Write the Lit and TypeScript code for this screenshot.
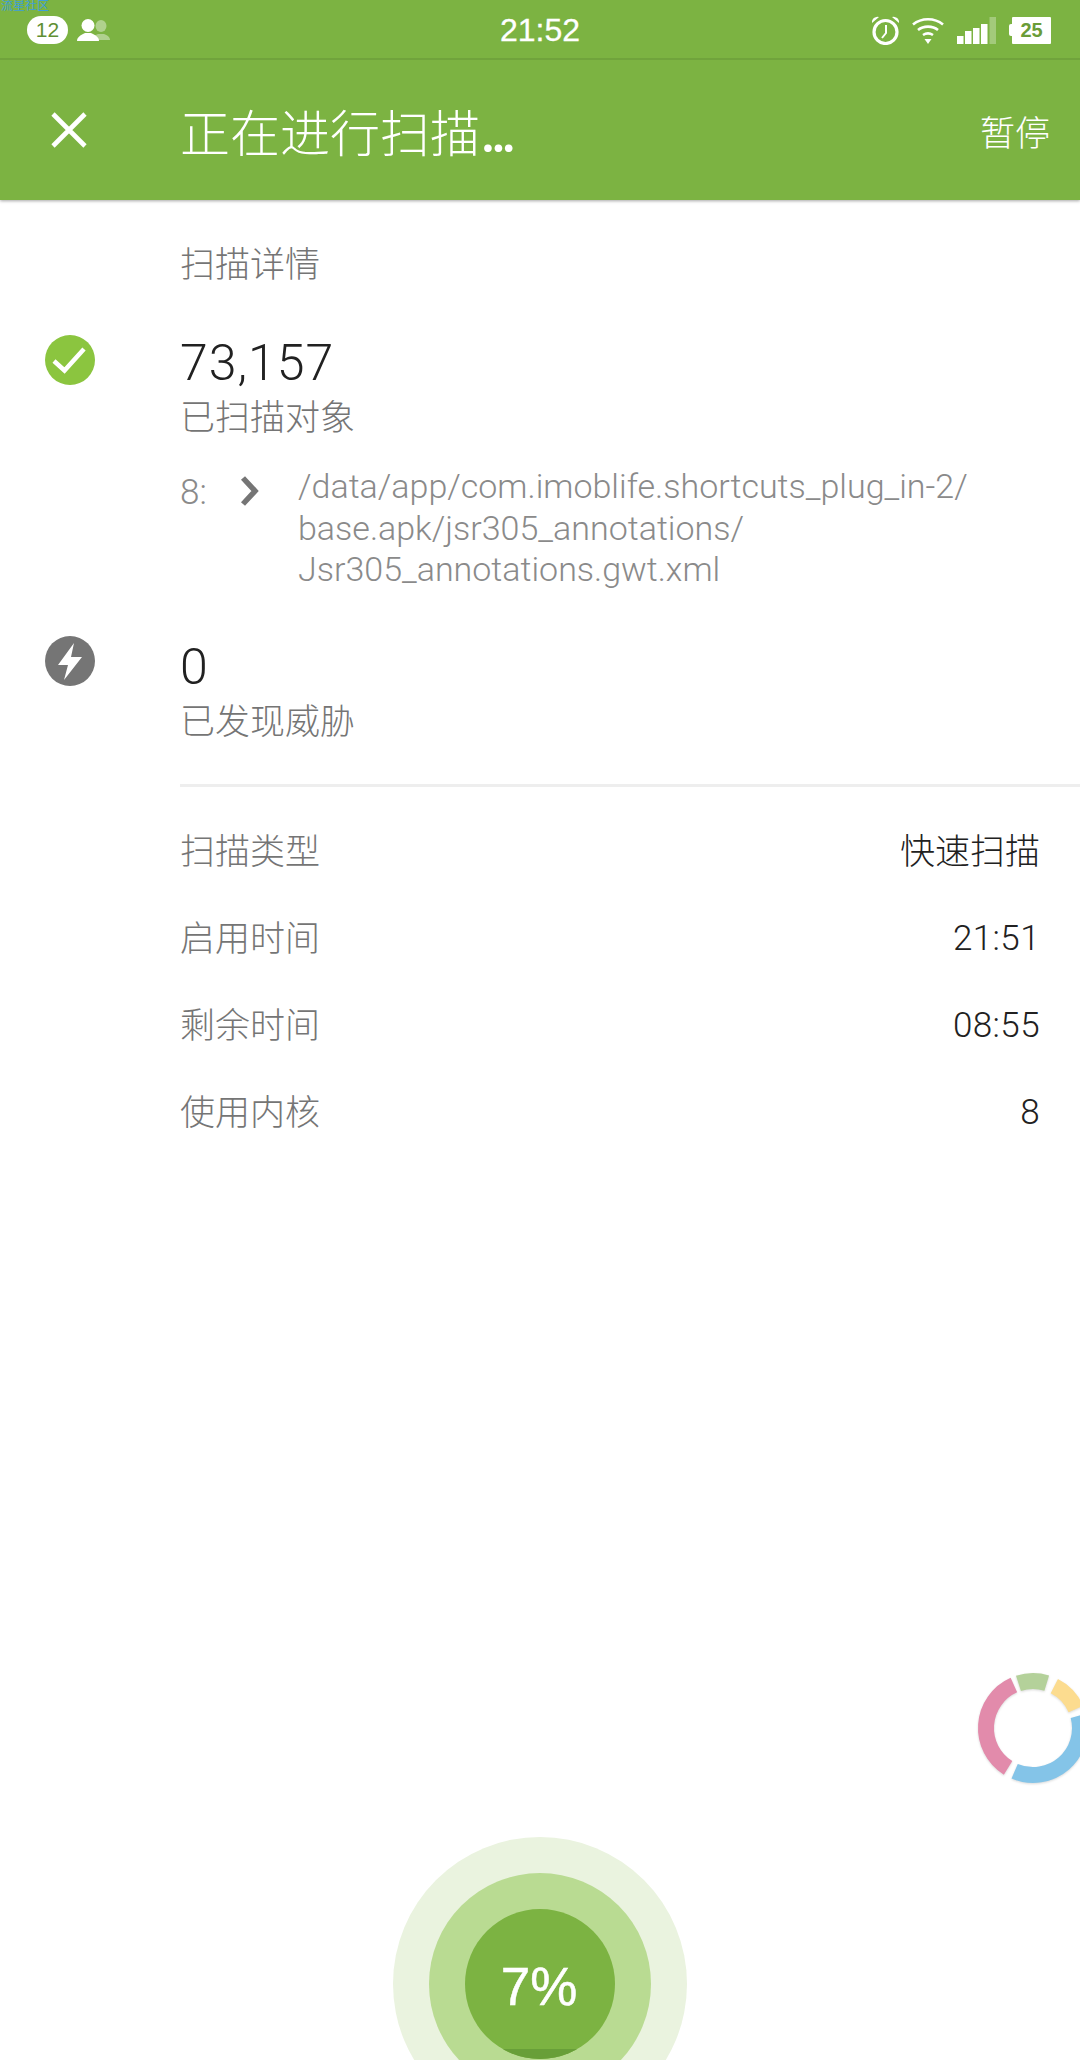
import { LitElement, html, css, svg } from "lit";
import { customElement } from "lit/decorators.js";

const arc = (r: number, a0: number, a1: number) => {
  const p = (a: number) => {
    const t = ((a - 90) * Math.PI) / 180;
    return `${(60 + r * Math.cos(t)).toFixed(2)} ${(60 + r * Math.sin(t)).toFixed(2)}`;
  };
  return `M${p(a0)} A${r} ${r} 0 ${a1 - a0 > 180 ? 1 : 0} 1 ${p(a1)}`;
};

@customElement("app-root")
export class AppRoot extends LitElement {
  static styles = css`
    :host {
      display: block;
      position: relative;
      width: 1080px;
      height: 2060px;
      overflow: hidden;
      background: #fff;
      font-family: "Liberation Sans", "Noto Sans CJK SC", sans-serif;
      color: #212121;
    }
    .head { background: #7cb342; height: 200px; box-shadow: 0 1px 3px rgba(0,0,0,.35); position: relative; z-index: 1; display: flex; flex-direction: column; }
    .status { height: 58px; border-bottom: 2px solid #70a33c; display: grid; grid-template-columns: 1fr auto 1fr; align-items: center; color: #fff; position: relative; }
    .wm { position: absolute; left: 1px; top: 0; font-size: 12px; line-height: 13px; color: #3e9fd8; }
    .sl { display: flex; align-items: center; padding: 2px 0 0 27px; gap: 9px; }
    .badge { width: 41px; height: 28px; border-radius: 14px; background: #fff; color: #5f8f33; font-size: 21px; line-height: 28px; text-align: center; }
    .time { font-size: 32px; padding-top: 2px; -webkit-text-stroke: .3px #fff; }
    .sr { display: flex; justify-content: flex-end; align-items: center; padding: 2px 29px 0 0; gap: 13px; }
    .batt { display: flex; align-items: center; }
    .nub { width: 3px; height: 12px; background: #fff; border-radius: 2px 0 0 2px; }
    .cell { width: 39px; height: 27px; background: #fff; border-radius: 1px; color: #6a9c38; font-size: 20px; font-weight: 700; line-height: 27px; text-align: center; }
    .bar { flex: 1; display: flex; align-items: center; color: #fff; }
    .x { width: 180px; padding-left: 51px; box-sizing: border-box; display: flex; }
    .title { flex: 1; font-size: 50px; font-weight: 300; display: flex; align-items: baseline; }
    .dots { font-family: Lato, "Liberation Sans", sans-serif; font-weight: 700; font-size: 50px; letter-spacing: -1.500px; margin-left: 2px; }
    .pause { font-size: 35px; padding-right: 30px; font-weight: 300; }
    .main { padding-left: 180px; padding-right: 40px; display: flex; flex-direction: column; }
    .sec { font-size: 35px; line-height: 44px; color: #757575; margin-top: 43px; font-weight: 300; }
    .stat { position: relative; }
    .stat svg { position: absolute; left: -135px; }
    .num { font-family: Roboto, "Liberation Sans", sans-serif; font-size: 50px; line-height: 56px; font-weight: 300; letter-spacing: 1px; }
    .lab { font-size: 35px; line-height: 44px; color: #757575; font-weight: 300; margin-top: 5px; }
    .s1 { margin-top: 48px; }
    .s2 { margin-top: 48px; }
    .s1 svg { top: 0; }
    .s2 svg { top: -3px; }
    .path { display: flex; margin-top: 26px; color: #8a8a8a; font-family: Roboto, "Liberation Sans", sans-serif; font-weight: 300; }
    .pn { width: 60px; font-size: 35px; line-height: 41px; padding-top: 6px; }
    .chev { width: 58px; padding-top: 10px; }
    .pt { font-size: 34px; line-height: 41.500px; white-space: pre; }
    .rule { height: 3px; background: #eeeeee; margin: 40px -40px 0 0; }
    .rows { display: flex; flex-direction: column; margin-top: 18px; }
    .row { height: 87px; display: flex; justify-content: space-between; align-items: center; font-size: 35px; font-weight: 300; }
    .row .k { color: #757575; }
    .row .v { font-family: Roboto, "Liberation Sans", "Noto Sans CJK SC", sans-serif; color: #212121; font-size: 35px; }
    .row .d { padding-top: 7px; letter-spacing: .4px; }
    .ring { position: absolute; left: 973px; top: 1668px; filter: drop-shadow(0 1px 1px rgba(0,0,0,.15)); }
    .dial { position: absolute; left: 393px; top: 1837px; width: 294px; height: 294px; border-radius: 50%; background: #eaf3df; display: flex; align-items: center; justify-content: center; }
    .d2 { width: 222px; height: 222px; border-radius: 50%; background: #b9db92; display: flex; align-items: center; justify-content: center; }
    .d3 { width: 150px; height: 150px; border-radius: 50%; background: #7cb342; color: #fff; display: flex; align-items: center; justify-content: center; font-size: 53px; position: relative; overflow: hidden; }
    .fill { position: absolute; left: 0; right: 0; bottom: 0; height: 10px; background: #689f38; }
    .pct { position: relative; top: 2px; left: -1px; -webkit-text-stroke: .5px #fff; }
  `;

  render() {
    return html`
      <div class="head">
        <div class="status">
          <div class="wm">流星社区</div>
          <div class="sl">
            <div class="badge">12</div>
            <svg width="33" height="23" viewBox="0 0 33 23">
              <g fill="#fff" opacity=".4"><ellipse cx="24" cy="7" rx="5.500" ry="6"/><path d="M15 21c0-3 3-5 6-6h6c3 1 6 3 6 6z"/></g>
              <g fill="#fff"><ellipse cx="11" cy="6.500" rx="6.500" ry="6.500"/><path d="M0 22c0-4 4-6 8-8h6c4 2 8 4 8 8z"/></g>
            </svg>
          </div>
          <div class="time">21:52</div>
          <div class="sr">
            <svg width="27" height="29" viewBox="0 0 27 29" fill="none" stroke="#fff">
              <circle cx="13.500" cy="16" r="11.500" stroke-width="3.200"/>
              <path d="M14 9v8l-4 5" stroke-width="2"/>
              <path d="M0 7a5.500 5.500 0 0 1 7-6zM27 7a5.500 5.500 0 0 0-7-6z" fill="#fff" stroke="none"/>
            </svg>
            <svg width="32" height="27" viewBox="0 0 32 27" fill="none" stroke="#fff" stroke-width="2.600">
              <path d="M1 7.500c8.500-7 21.500-7 30 0"/>
              <path d="M6 13c5.500-4.500 14.500-4.500 20 0"/>
              <path d="M11 18c3-2 7-2 10 0"/>
              <path d="M12.500 22h7L16 27z" fill="#fff" stroke="none"/>
            </svg>
            <svg width="39" height="27" viewBox="0 0 39 27" fill="#fff">
              <rect x="0" y="19" width="6.500" height="8"/><rect x="8" y="14" width="6.500" height="13"/>
              <rect x="16" y="11" width="6.500" height="16"/><rect x="24" y="7" width="6.500" height="20"/>
              <rect x="32.500" y="0" width="6.500" height="27" opacity=".3"/>
            </svg>
            <div class="batt"><div class="nub"></div><div class="cell">25</div></div>
          </div>
        </div>
        <div class="bar">
          <div class="x">
            <svg width="36" height="36" viewBox="0 0 36 36" stroke="#fff" stroke-width="4.600"><path d="M2 2l32 32M34 2L2 34"/></svg>
          </div>
          <div class="title">正在进行扫描<span class="dots">...</span></div>
          <div class="pause">暂停</div>
        </div>
      </div>
      <div class="main">
        <div class="sec">扫描详情</div>
        <div class="stat s1">
          <svg width="50" height="50" viewBox="0 0 50 50"><circle cx="25" cy="25" r="25" fill="#8bc53f"/><path d="M9 26l10.500 9.500L39 14" fill="none" stroke="#fff" stroke-width="4.500"/></svg>
          <div class="num">73,157</div>
          <div class="lab">已扫描对象</div>
        </div>
        <div class="path">
          <div class="pn">8:</div>
          <div class="chev"><svg width="20" height="30" viewBox="0 0 20 30" fill="none" stroke="#757575" stroke-width="5.500"><path d="M3 2l12 13L3 28"/></svg></div>
          <div class="pt">/data/app/com.imoblife.shortcuts_plug_in-2/
base.apk/jsr305_annotations/
Jsr305_annotations.gwt.xml</div>
        </div>
        <div class="stat s2">
          <svg width="50" height="50" viewBox="0 0 50 50"><circle cx="25" cy="25" r="25" fill="#757575"/><path d="M29 7L13 29h10l-4 15 18-23H26z" fill="#fff"/></svg>
          <div class="num">0</div>
          <div class="lab">已发现威胁</div>
        </div>
        <div class="rule"></div>
        <div class="rows">
          <div class="row"><span class="k">扫描类型</span><span class="v">快速扫描</span></div>
          <div class="row"><span class="k">启用时间</span><span class="v d">21:51</span></div>
          <div class="row"><span class="k">剩余时间</span><span class="v d">08:55</span></div>
          <div class="row"><span class="k">使用内核</span><span class="v d">8</span></div>
        </div>
      </div>
      <svg class="ring" width="120" height="120" viewBox="0 0 120 120" fill="none" stroke-width="16">
        ${svg`
          <path d="${arc(47, 212, 336)}" stroke="#e28bab"/>
          <path d="${arc(47, 342, 377)}" stroke="#b4d19a"/>
          <path d="${arc(47, 27, 66)}" stroke="#fcdc8f"/>
          <path d="${arc(47, 75, 203)}" stroke="#84c4e8"/>
        `}
      </svg>
      <div class="dial"><div class="d2"><div class="d3"><div class="fill"></div><span class="pct">7%</span></div></div></div>
    `;
  }
}
